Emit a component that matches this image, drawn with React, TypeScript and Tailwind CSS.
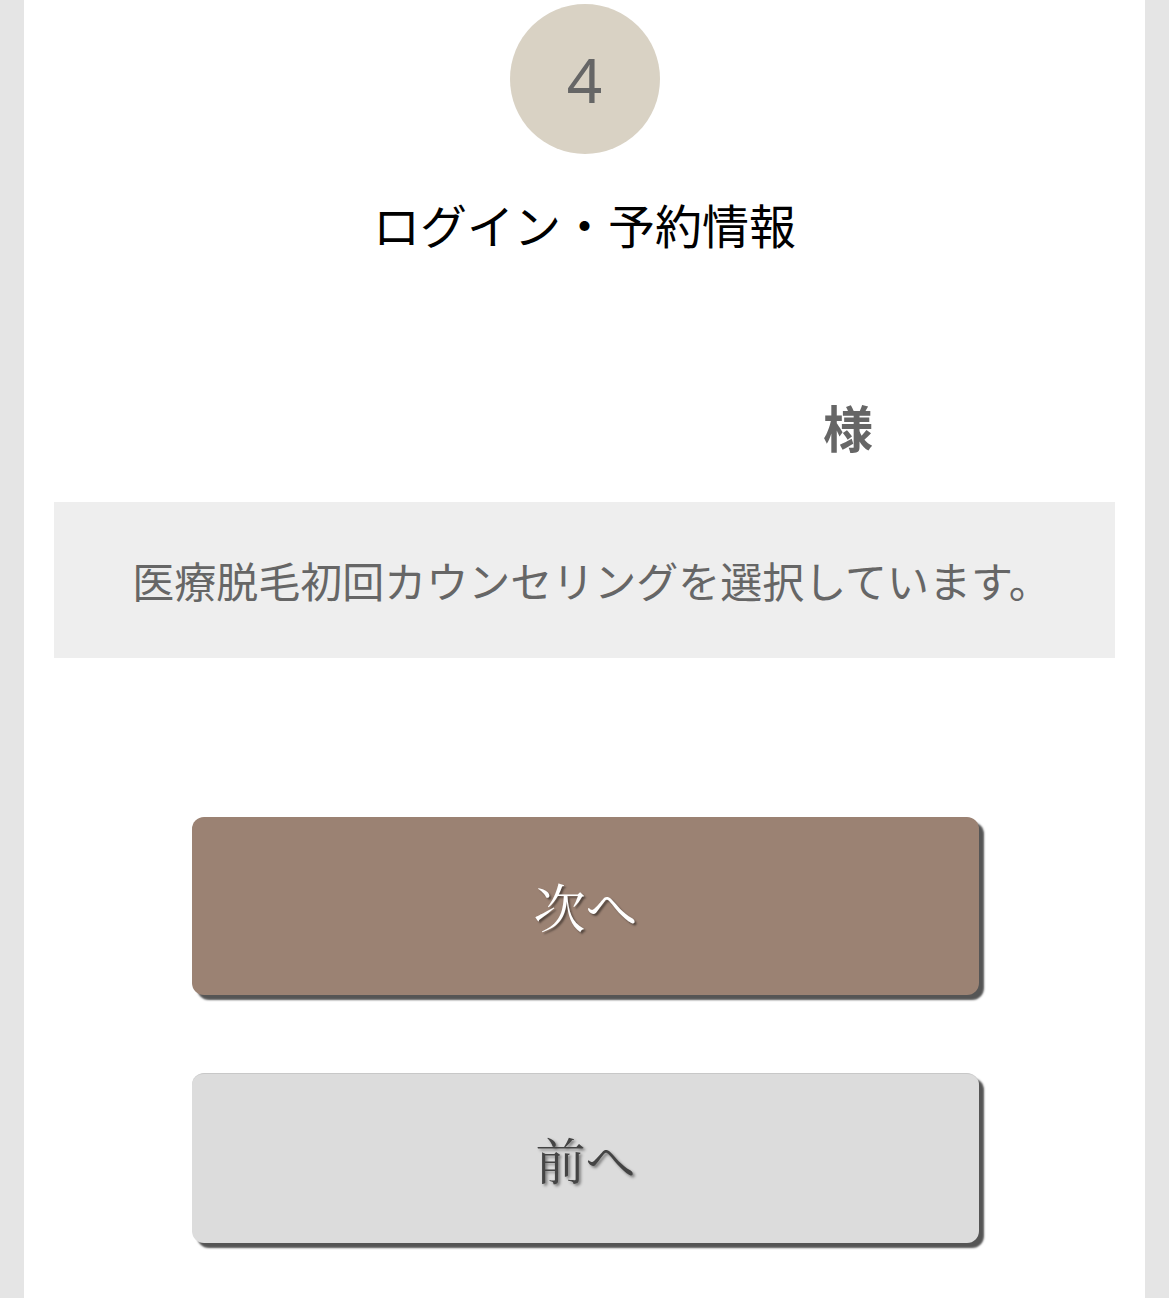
export default function App() {
  const sans = { fontFamily: '"Noto Sans CJK JP", "Noto Sans", sans-serif' };
  const serif = { fontFamily: '"Noto Serif CJK JP", "Liberation Serif", "Noto Sans CJK JP", serif' };

  return (
    <div className="min-h-[1298px] bg-[#e5e5e5] px-[24px]" style={sans}>
      <div className="min-h-[1298px] bg-white pt-[4px]">
        <div className="flex flex-col items-center">
          <div className="flex h-[150px] w-[150px] items-center justify-center rounded-full bg-[#d9d2c4]">
            <span className="text-[62px] font-normal leading-none text-[#666]" style={{ fontFamily: '"Noto Sans", sans-serif' }}>
              4
            </span>
          </div>
          <h1 className="mt-[37px] text-[47px] font-normal leading-[66px] text-black">ログイン・予約情報</h1>
        </div>

        <div className="mt-[139px] flex justify-end pr-[272px]">
          <span className="text-[50px] font-bold leading-[60px] text-[#666]">様</span>
        </div>

        <div className="mx-[30px] mt-[46px] flex h-[156px] items-center justify-center bg-[#eeeeee]">
          <p className="ml-[14px] text-[42px] leading-none text-[#666]">医療脱毛初回カウンセリングを選択しています。</p>
        </div>

        <div className="mt-[159px] flex flex-col items-center gap-[78px]">
          <button
            className="ml-[2px] flex h-[178px] w-[787px] items-center justify-center rounded-[12px] bg-[#9b8273] text-[52px] text-white shadow-[5px_5px_2px_#555]"
            style={{ ...serif, textShadow: "2px 2px 2px rgba(0,0,0,0.45)" }}
          >
            次へ
          </button>
          <button
            className="ml-[2px] flex h-[170px] w-[787px] items-center justify-center rounded-[12px] border-t border-[#c8c8c8] bg-[#dcdcdc] text-[50px] text-[#444] shadow-[5px_5px_2px_#555]"
            style={{ ...serif, textShadow: "2px 2px 3px rgba(0,0,0,0.45)" }}
          >
            前へ
          </button>
        </div>
      </div>
    </div>
  );
}
